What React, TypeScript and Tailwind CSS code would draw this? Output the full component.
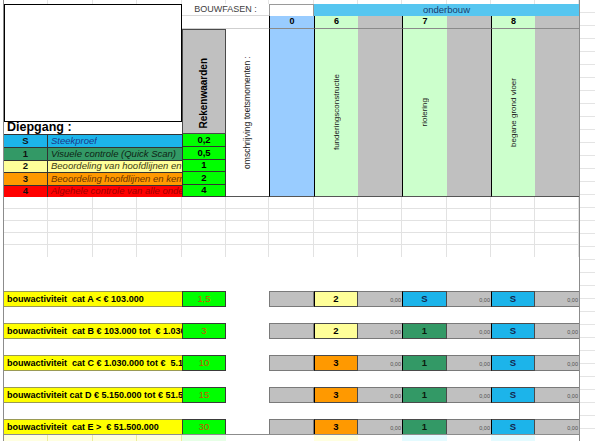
import React from 'react';

// spreadsheet columns, 13 of them, starting at x=4
const COLS =
  'grid grid-cols-[44px_45px_44px_45px_44px_43px_45px_44px_44px_45px_44px_44px_44px]';

const codeBg: Record<string, string> = {
  S: 'bg-[#1cb4ea] text-[#14284d]',
  '1': 'bg-[#339966] text-[#0b1a0e]',
  '2': 'bg-[#ffff99] text-black',
  '3': 'bg-[#ff9900] text-black',
};

const legend = [
  { code: 'S', label: 'Steekproef', bg: 'bg-[#1cb4ea]', text: 'text-[#1c3a8a]', value: '0,2', h: 'h-[13px]' },
  { code: '1', label: 'Visuele controle (Quick Scan)', bg: 'bg-[#339966]', text: 'text-[#0e2414]', value: '0,5', h: 'h-[13px]' },
  { code: '2', label: 'Beoordeling van hoofdlijnen en kernpunten', bg: 'bg-[#ffff99]', text: 'text-[#3a3a12]', value: '1', h: 'h-[12px]' },
  { code: '3', label: 'Beoordeling hoofdlijnen en kernpunten', bg: 'bg-[#ff9900]', text: 'text-[#6b3300]', value: '2', h: 'h-[13px]' },
  { code: '4', label: 'Algehele controle van alle onderdelen', bg: 'bg-[#ff0000]', text: 'text-[#a00000]', value: '4', h: 'h-[12px]' },
];

const phases = [
  { nr: '6', label: 'funderingsconstructie' },
  { nr: '7', label: 'riolering' },
  { nr: '8', label: 'begane grond vloer' },
];

const activities = [
  { label: 'bouwactiviteit  cat A < € 103.000', value: '1,5', codes: ['2', 'S', 'S'] },
  { label: 'bouwactiviteit  cat B € 103.000 tot  € 1.030.000', value: '3', codes: ['2', '1', 'S'] },
  { label: 'bouwactiviteit  cat C € 1.030.000 tot €  5.150.000', value: '10', codes: ['3', '1', 'S'] },
  { label: 'bouwactiviteit cat D € 5.150.000 tot € 51.500.000', value: '15', codes: ['3', '1', 'S'] },
  { label: 'bouwactiviteit  cat E >  € 51.500.000', value: '30', codes: ['3', '1', 'S'] },
];

const Vertical: React.FC<{ children: React.ReactNode; className?: string }> = ({ children, className = '' }) => (
  <span className={`rotate-180 whitespace-nowrap leading-none [writing-mode:vertical-rl] ${className}`}>{children}</span>
);

const GrayValue: React.FC = () => (
  <div className="flex items-center justify-end border-y border-[#7a7a7a] bg-[#c0c0c0] pt-[2px] pr-[1px] text-[5.5px] text-[#505050]">
    0,00
  </div>
);

const CodeCell: React.FC<{ code: string }> = ({ code }) => (
  <div className={`flex items-center justify-center border border-[#4a4a4a] border-l-black text-[9.5px] font-bold ${codeBg[code]}`}>
    {code}
  </div>
);

export default function App() {
  const gridCells = Array.from({ length: 65 }, (_, i) => i);

  return (
    <div className="flex h-[441px] w-[595px] overflow-hidden bg-white font-['Liberation_Sans',Arial,sans-serif] text-black">
      {/* left margin + page edge */}
      <div className="w-[4px] shrink-0 border-r border-[#8c8c8c]" />

      <div className="flex w-[576px] shrink-0 flex-col border-r border-[#8c8c8c]">
        {/* top strip of gridlines */}
        <div className={`${COLS} h-[4px]`}>
          {Array.from({ length: 13 }, (_, i) => (
            <div key={i} className="border-r border-[#e4e4e4]" />
          ))}
        </div>

        {/* header block */}
        <div className={`${COLS} grid-rows-[12px_13px_93px_12px_63px]`}>
          <div className="col-span-4 col-start-1 row-span-3 row-start-1 border border-black bg-white" />

          <div className="col-span-2 col-start-5 row-start-1 flex items-center justify-center border-b border-[#d9d9d9] text-[9px] text-[#404040]">
            BOUWFASEN :
          </div>
          <div className="col-start-7 row-start-1 border-x border-t border-[#9a9a9a] bg-white" />
          <div className="col-span-6 col-start-8 row-start-1 flex items-center justify-center bg-[#56c6f0] text-[9.5px] text-[#1b3d6e]">
            onderbouw
          </div>

          <div className="col-span-2 col-start-5 row-start-2 border-b border-[#cfcfcf]" />
          <div className="col-start-7 row-start-2 flex items-center justify-center border-b border-l border-b-[#8a8a8a] border-l-black bg-[#99ccff] text-[9px] font-bold">
            0
          </div>

          {/* Rekenwaarden */}
          <div className="col-start-5 row-span-2 row-start-3 flex items-end justify-center border border-[#4a4a4a] bg-[#c0c0c0] pb-[4px]">
            <Vertical className="text-[10px] font-bold">Rekenwaarden</Vertical>
          </div>
          <div className="col-start-5 row-start-5 flex flex-col">
            {legend.map((l) => (
              <div
                key={l.code}
                className={`flex items-center justify-center border-x border-b border-[#333] bg-[#00ff00] text-[9.5px] font-bold ${l.h}`}
              >
                {l.value}
              </div>
            ))}
          </div>

          <div className="col-start-6 row-span-3 row-start-3 flex items-center justify-center border-b border-[#555] bg-white">
            <Vertical className="text-[8.5px] text-[#222]">omschrijving toetsmomenten :</Vertical>
          </div>

          <div className="col-start-7 row-span-3 row-start-3 border-b border-l border-b-[#555] border-l-black bg-[#99ccff]" />

          {/* onderbouw phases */}
          <div className="col-span-6 col-start-8 row-span-4 row-start-2 grid grid-flow-col grid-cols-[44px_44px_45px_44px_44px_44px] grid-rows-[13px_1fr]">
            {phases.map((p) => (
              <React.Fragment key={p.nr}>
                <div className="flex items-center justify-center border-b border-l border-b-[#8a8a8a] border-l-black bg-[#ccffcc] text-[9px] font-bold">
                  {p.nr}
                </div>
                <div className="flex items-center justify-center border-b border-l border-b-[#555] border-l-black bg-[#ccffcc]">
                  <Vertical className="text-[8px] text-[#222]">{p.label}</Vertical>
                </div>
                <div className="border-b border-[#8a8a8a] bg-[#c0c0c0]" />
                <div className="border-b border-[#555] bg-[#c0c0c0]" />
              </React.Fragment>
            ))}
          </div>

          {/* Diepgang legend */}
          <div className="col-span-4 col-start-1 row-start-4 flex items-end pl-[3px] text-[12.5px] leading-none font-bold">
            Diepgang :
          </div>
          <div className="col-span-4 col-start-1 row-start-5 flex flex-col">
            {legend.map((l) => (
              <div key={l.code} className={`flex border-t border-[#333] ${l.bg} ${l.h}`}>
                <div className="flex w-[44px] shrink-0 items-center justify-center border-r border-[#333] text-[9.5px] font-bold text-[#111]">
                  {l.code}
                </div>
                <div className={`flex items-center overflow-hidden whitespace-nowrap pl-[3px] text-[9.5px] italic ${l.text}`}>
                  {l.label}
                </div>
              </div>
            ))}
          </div>
        </div>

        {/* empty rows with gridlines */}
        <div className={`${COLS} grid-rows-[12px_12px_12px_12px_12px]`}>
          {gridCells.map((i) => (
            <div key={i} className={i < 52 ? 'border-r border-b border-[#e2e2e2]' : 'border-r border-[#e2e2e2]'} />
          ))}
        </div>

        <div className="h-[35px]" />

        {/* bouwactiviteiten */}
        <div className="flex flex-col gap-[17px]">
          {activities.map((a) => (
            <div key={a.label} className={`${COLS} h-[15px]`}>
              <div className="col-span-4 flex items-center overflow-hidden whitespace-pre border-y border-[#9a9a55] bg-[#ffff00] pl-[3px] text-[9px] font-bold">
                {a.label}
              </div>
              <div className="flex items-center justify-center border border-[#3a3a3a] bg-[#00ff00] text-[9.5px] text-[#c65400]">
                {a.value}
              </div>
              <div />
              <div className="border border-[#7a7a7a] bg-[#c0c0c0]" />
              <CodeCell code={a.codes[0]} />
              <GrayValue />
              <CodeCell code={a.codes[1]} />
              <GrayValue />
              <CodeCell code={a.codes[2]} />
              <GrayValue />
            </div>
          ))}
        </div>

        {/* page edge + next row peeking in */}
        <div className="mt-[0px] h-px bg-[#8c8c8c]" />
        <div className={`${COLS} h-[6px]`}>
          <div className="border-r border-[#ecec9a] bg-[#ffffe0]" />
          <div className="border-r border-[#ecec9a] bg-[#ffffe0]" />
          <div className="border-r border-[#ecec9a] bg-[#ffffe0]" />
          <div className="border-r border-[#ecec9a] bg-[#ffffe0]" />
          <div className="bg-[#e6ffe6]" />
          <div />
          <div />
          <div className="bg-[#ffffe0]" />
          <div />
          <div className="bg-[#e4fbff]" />
          <div />
          <div className="bg-[#e4fbff]" />
          <div />
        </div>
      </div>

      {/* right margin with hidden gridlines */}
      <div className="flex-1 bg-[repeating-linear-gradient(to_bottom,transparent_0px,transparent_12px,#e4e4e4_12px,#e4e4e4_13px)]" />
    </div>
  );
}
